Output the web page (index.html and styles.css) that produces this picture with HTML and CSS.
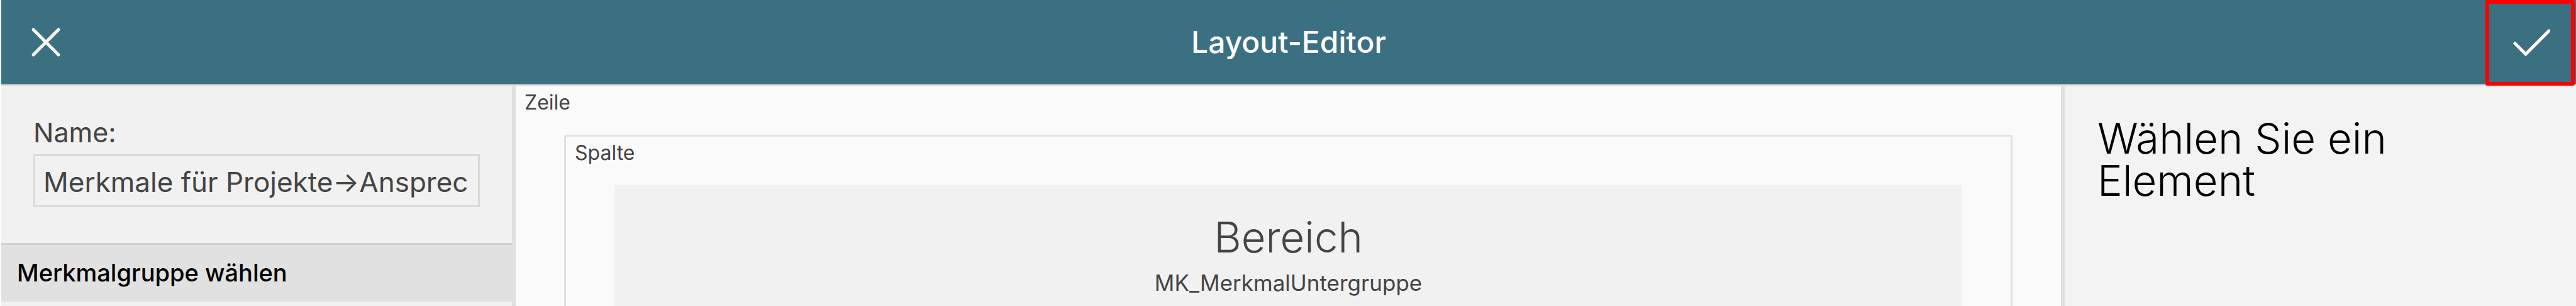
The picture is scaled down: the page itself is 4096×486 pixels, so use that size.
FILE: index.html
```html
<!DOCTYPE html>
<html lang="de">
<head>
<meta charset="utf-8">
<title>Layout-Editor</title>
<link rel="stylesheet" href="styles.css">
</head>
<body>
<div class="app">
  <header class="topbar">
    <button class="icon-button" type="button" aria-label="Schließen">
      <svg class="icon" viewBox="0 0 64 64" aria-hidden="true"><path d="M12 12 52 52M52 12 12 52"/></svg>
    </button>
    <h1 class="topbar-title">Layout-Editor</h1>
    <button class="icon-button icon-button-marked" type="button" aria-label="Übernehmen">
      <svg class="icon" viewBox="0 0 64 64" aria-hidden="true"><path d="M8 33 25 50 62 13"/></svg>
    </button>
  </header>
  <div class="workspace">
    <aside class="sidebar">
      <div class="field">
        <label class="field-label" for="name">Name:</label>
        <input class="field-input" id="name" type="text" value="Merkmale für Projekte→Ansprechpartner">
      </div>
      <h2 class="group-title">Merkmalgruppe wählen</h2>
    </aside>
    <main class="row">
      <div class="tag">Zeile</div>
      <section class="column">
        <div class="tag">Spalte</div>
        <div class="area">
          <h3 class="area-title">Bereich</h3>
          <p class="area-name">MK_MerkmalUntergruppe</p>
        </div>
      </section>
    </main>
    <aside class="details">
      <h2 class="details-title">Wählen Sie ein Element</h2>
    </aside>
  </div>
</div>
</body>
</html>
```
FILE: styles.css
```css
* {
  box-sizing: border-box;
}

body {
  margin: 0;
  background: #fff;
  color: #444;
  font-family: Inter, "Liberation Sans", sans-serif;
}

h1, h2, h3, p {
  margin: 0;
}

.app {
  display: flex;
  flex-direction: column;
  height: 100vh;
  padding-left: 2px;
  overflow: hidden;
}

.topbar {
  display: grid;
  grid-template-columns: 1fr auto 1fr;
  align-items: start;
  height: 137px;
  flex: none;
  background: #3a7081;
  border-bottom: 3px solid #e0e0e0;
}

.topbar-title {
  color: #fff;
  font-size: 48px;
  font-weight: 500;
  line-height: 134px;
}

.icon-button {
  display: flex;
  align-items: center;
  justify-content: center;
  width: 142px;
  height: 134px;
  padding: 0;
  border: 0;
  background: none;
}

.icon-button-marked {
  justify-self: end;
  height: 136px;
  margin-right: 2px;
  border: 6px solid #f00;
  border-radius: 3px;
}

.icon {
  width: 64px;
  height: 64px;
  fill: none;
  stroke: #fff;
  stroke-width: 5;
  stroke-linecap: round;
}

.workspace {
  display: grid;
  grid-template-columns: 818px 1fr 819px;
  flex: 1;
  min-height: 0;
}

.sidebar {
  background: #f1f1f1;
  border-right: 6px solid #e0e0e0;
}

.field {
  display: flex;
  flex-direction: column;
  gap: 13px;
  padding: 51px 51px 57px;
}

.field-label {
  font-size: 43px;
  line-height: 44px;
}

.field-input {
  width: 100%;
  height: 84px;
  padding: 3px 13px 0;
  border: 3px solid #d9d9d9;
  background: transparent;
  color: #444;
  font-family: inherit;
  font-size: 44px;
}

.group-title {
  padding: 20px 25px 22px;
  border-top: 3px solid #d0d0d0;
  background: #e1e1e1;
  color: #000;
  font-size: 38px;
  font-weight: 500;
  line-height: 48px;
}

.row {
  padding: 0 77px;
  background: #fafafa;
  overflow: hidden;
}

.tag {
  margin-left: -63px;
  padding-bottom: 25px;
  font-size: 32px;
  line-height: 52px;
}

.column {
  height: 600px;
  padding: 0 77px;
  border: 3px solid #e0e0e0;
  border-radius: 4px;
}

.area {
  height: 500px;
  padding-top: 43px;
  background: #f1f1f1;
  text-align: center;
}

.area-title {
  font-size: 67px;
  font-weight: 300;
  line-height: 80px;
}

.area-name {
  font-size: 35px;
  line-height: 64px;
}

.details {
  padding: 49px 52px;
  background: #f3f3f3;
  border-left: 6px solid #e0e0e0;
}

.details-title {
  max-width: 600px;
  color: #000;
  font-size: 67px;
  font-weight: 300;
  line-height: 67px;
}
```
